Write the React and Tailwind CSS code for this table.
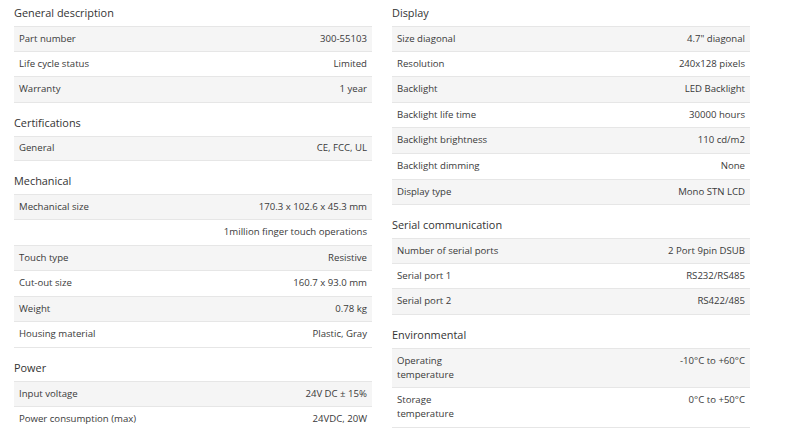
const left = [
  {
    title: "General description",
    rows: [
      ["Part number", "300-55103"],
      ["Life cycle status", "Limited"],
      ["Warranty", "1 year"],
    ],
  },
  {
    title: "Certifications",
    rows: [["General", "CE, FCC, UL"]],
  },
  {
    title: "Mechanical",
    rows: [
      ["Mechanical size", "170.3 x 102.6 x 45.3 mm"],
      ["", "1million finger touch operations"],
      ["Touch type", "Resistive"],
      ["Cut-out size", "160.7 x 93.0 mm"],
      ["Weight", "0.78 kg"],
      ["Housing material", "Plastic, Gray"],
    ],
  },
  {
    title: "Power",
    rows: [
      ["Input voltage", "24V DC ± 15%"],
      ["Power consumption (max)", "24VDC, 20W"],
    ],
  },
];

const right = [
  {
    title: "Display",
    rows: [
      ["Size diagonal", "4.7\" diagonal"],
      ["Resolution", "240x128 pixels"],
      ["Backlight", "LED Backlight"],
      ["Backlight life time", "30000 hours"],
      ["Backlight brightness", "110 cd/m2"],
      ["Backlight dimming", "None"],
      ["Display type", "Mono STN LCD"],
    ],
  },
  {
    title: "Serial communication",
    rows: [
      ["Number of serial ports", "2 Port 9pin DSUB"],
      ["Serial port 1", "RS232/RS485"],
      ["Serial port 2", "RS422/485"],
    ],
  },
  {
    title: "Environmental",
    tall: true,
    rows: [
      ["Operating temperature", "-10°C to +60°C"],
      ["Storage temperature", "0°C to +50°C"],
    ],
  },
];

function SpecTable({ title, rows, first, tall }) {
  return (
    <div className={first ? "" : "mt-[7px]"}>
      <h2 className="flex h-[26px] items-center text-[10.9px] text-[#333]">
        {title}
      </h2>
      <div>
        {rows.map(([label, value], i) => (
          <div
            key={i}
            className={
              "flex justify-between border-b border-[#e6e6e6] px-[5px] text-[9.6px] text-[#3a3a3a] " +
              (i === 0 ? "border-t " : "") +
              (i % 2 === 0 ? "bg-[#f5f5f5] " : "bg-white ") +
              (tall
                ? "h-[40px] items-start py-[5px] leading-[14px]"
                : "h-[25.6px] items-center")
            }
          >
            <span className={tall ? "w-[90px]" : ""}>{label}</span>
            <span>{value}</span>
          </div>
        ))}
      </div>
    </div>
  );
}

export default function App() {
  return (
    <div
      className="h-[431px] w-[800px] overflow-hidden bg-white pl-[14px]"
      style={{ fontFamily: '"Open Sans", "Noto Sans", sans-serif' }}
    >
      <div className="grid grid-cols-[358px_358px] gap-x-[20px]">
        <div>
          {left.map((s, i) => (
            <SpecTable key={s.title} {...s} first={i === 0} />
          ))}
        </div>
        <div>
          {right.map((s, i) => (
            <SpecTable key={s.title} {...s} first={i === 0} />
          ))}
        </div>
      </div>
    </div>
  );
}
